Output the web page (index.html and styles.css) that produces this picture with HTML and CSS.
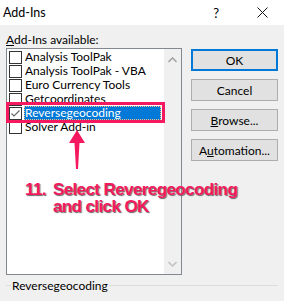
FILE: index.html
```html
<!DOCTYPE html>
<html lang="en">
<head>
  <meta charset="UTF-8" />
  <title>Add-Ins</title>
  <link rel="stylesheet" href="styles.css">
</head>
<body>
  <div class="dialog">
    <div class="titlebar">
      <span class="title">Add-Ins</span>
      <span class="help">?</span>
      <svg class="close" width="11" height="11" viewBox="0 0 11 11">
        <path d="M0.5 0.5 L10.5 10.5 M10.5 0.5 L0.5 10.5" stroke="#111" stroke-width="1" fill="none"/>
      </svg>
    </div>

    <div class="content">
      <div class="label"><u>A</u>dd-Ins available:</div>
      <div class="listbox">
        <ul class="items">
          <li class="item"><span class="check"></span>Analysis ToolPak</li>
          <li class="item"><span class="check"></span>Analysis ToolPak - VBA</li>
          <li class="item"><span class="check"></span>Euro Currency Tools</li>
          <li class="item"><span class="check"></span>Getcoordinates</li>
          <li class="item selected">
            <span class="check">
              <svg width="11" height="11" viewBox="0 0 11 11"><path d="M1.5 5.5 L4 8 L9.5 2.5" stroke="#666" stroke-width="1.2" fill="none"/></svg>
            </span>
            <span class="name">Reversegeocoding</span>
          </li>
          <li class="item"><span class="check"></span>Solver Add-in</li>
        </ul>
        <div class="scrollbar">
          <svg width="9" height="6" viewBox="0 0 9 6"><path d="M0.5 5 L4.5 1 L8.5 5" stroke="#a6a6a6" stroke-width="1.6" fill="none"/></svg>
          <svg width="9" height="6" viewBox="0 0 9 6"><path d="M0.5 1 L4.5 5 L8.5 1" stroke="#c4c4c4" stroke-width="1.6" fill="none"/></svg>
        </div>
        <div class="highlight-box"></div>
      </div>

      <div class="buttons">
        <button class="btn default">OK</button>
        <button class="btn">Cancel</button>
        <button class="btn"><u>B</u>rowse...</button>
        <button class="btn">A<u>u</u>tomation...</button>
      </div>
    </div>

    <div class="group">
      <span class="group-title">Reversegeocoding</span>
    </div>

    <!-- annotation on top of the dialog -->
    <svg class="arrow" width="20" height="42" viewBox="0 0 20 42">
      <path d="M10 1 L18 14 L12.5 14 L11 40 L9 40 L7.5 14 L2 14 Z" fill="#f5195f"/>
    </svg>
    <div class="note">
      <span class="step">11.</span>
      <span class="step-text">Select Reveregeocoding<br>and click OK</span>
    </div>
  </div>
</body>
</html>
```

FILE: styles.css
```css
* {
  box-sizing: border-box;
  margin: 0;
  padding: 0;
}
body {
  background: #f0f0f0;
  font-family: Lato, "Segoe UI", "Noto Sans", sans-serif;
  font-size: 12px;
  color: #000;
}
.dialog {
  position: relative;
  width: 284px;
  height: 301px;
  overflow: hidden;
}
.titlebar {
  height: 25px;
  background: #fff;
  display: flex;
  align-items: center;
  padding-left: 3px;
}
.title {
  flex-grow: 1;
  font-size: 12.5px;
}
.help {
  font-size: 13px;
  margin-right: 38px;
}
.close {
  margin-right: 16px;
}
.content {
  display: grid;
  grid-template-columns: 176px 87px;
  column-gap: 9px;
  padding: 7px 0 0 6px;
}
.label {
  grid-column: 1 / 3;
  height: 16px;
  line-height: 15px;
}
.listbox {
  position: relative;
  height: 227px;
  border: 1px solid #828790;
  background: #fff;
  display: flex;
}
.items {
  list-style: none;
  flex-grow: 1;
  padding-top: 1px;
}
.item {
  height: 14px;
  display: flex;
  align-items: center;
  line-height: 14px;
  padding-left: 2px;
  white-space: nowrap;
}
.check {
  width: 13px;
  height: 13px;
  border: 1px solid #333;
  background: #fff;
  margin-right: 3px;
  display: flex;
  align-items: center;
  justify-content: center;
  flex-shrink: 0;
}
.item.selected .name {
  background: #0078d7;
  color: #fff;
  flex-grow: 1;
  margin-right: 3px;
  padding-left: 1px;
  margin-left: -1px;
  outline: 1px dotted #f4c38a;
  outline-offset: -1px;
}
.scrollbar {
  width: 17px;
  background: #f0f0f0;
  display: flex;
  flex-direction: column;
  justify-content: space-between;
  align-items: center;
  padding: 8px 0 7px;
}
.highlight-box {
  position: absolute;
  left: -1px;
  top: 53px;
  width: 159px;
  height: 21px;
  border: 3px solid #f5195f;
}
.buttons {
  display: flex;
  flex-direction: column;
  gap: 8px;
  padding-top: 1px;
}
.btn {
  height: 22px;
  background: #e1e1e1;
  border: 1px solid #adadad;
  font-family: inherit;
  font-size: 12px;
  color: #000;
}
.btn.default {
  border: 2px solid #0078d7;
}
.group {
  margin: 10px 6px 0 6px;
  border-top: 1px solid #dcdcdc;
  height: 20px;
}
.group-title {
  position: relative;
  top: -8px;
  left: 5px;
  background: #f0f0f0;
  padding: 0 1px;
}
.arrow {
  position: absolute;
  left: 67px;
  top: 129px;
}
.note {
  position: absolute;
  left: 25px;
  top: 181px;
  display: flex;
  gap: 7px;
  font-family: "Liberation Sans", Arial, sans-serif;
  font-weight: bold;
  font-size: 17px;
  letter-spacing: -0.6px;
  line-height: 17px;
  color: #f5195f;
  text-shadow: 1px 1px 1px #666;
}
.step-text {
  white-space: nowrap;
}
```
